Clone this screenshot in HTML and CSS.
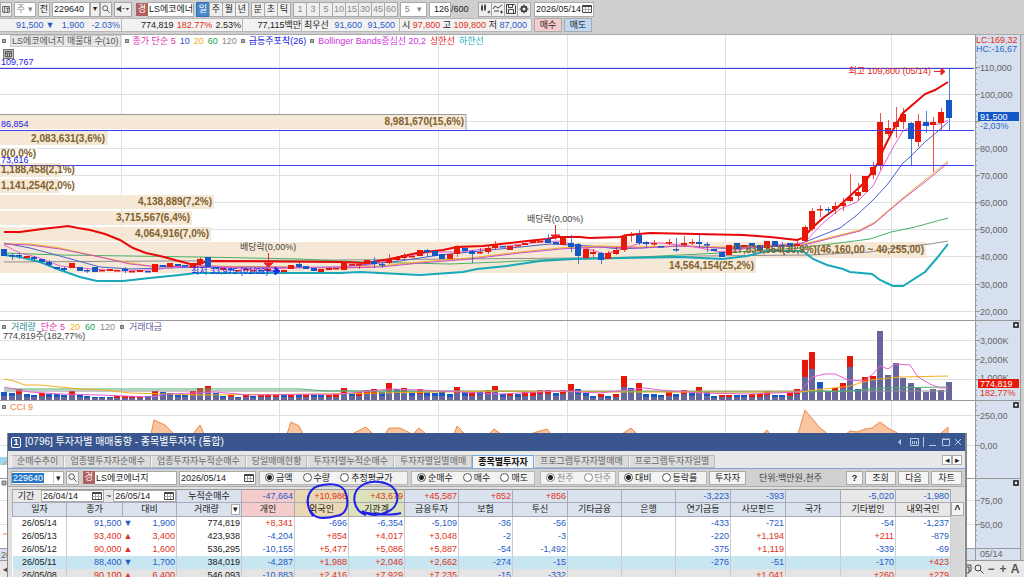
FILE: index.html
```html
<!DOCTYPE html>
<html lang="ko">
<head>
<meta charset="utf-8">
<title>LS에코에너지 - 주식 종합차트</title>
<link rel="stylesheet" href="styles.css">
</head>
<body>
<svg class="defs" aria-hidden="true">
  <symbol id="i-search" viewBox="0 0 12 12"><circle cx="5" cy="5" r="3" /><path d="M7.2 7.2L10.5 10.5" /></symbol>
  <symbol id="i-cal" viewBox="0 0 12 12"><path d="M1.500 2.500h9v7h-9zM1.500 3.500h9" /><path class="thin" d="M1.500 6.500h9M4.500 4v5M7.500 4v5" /></symbol>
</svg>
<header class="toolbar">
  <button class="tb w12" aria-label="메뉴"><svg viewBox="0 0 12 12"><path d="M2 3h8v7H2zM4.5 3v7M6 5h4M8 5v5" /></svg></button>
  <button class="tb w24 gap2 combo dim"><span>주</span><i>▾</i></button>
  <button class="tb w12 gap2">전</button>
  <input class="fld w38 gap2 num" aria-label="종목코드" value="229640"><button class="tb w10 tiny" aria-label="목록">▾</button>
  <button class="tb w12" aria-label="검색"><svg viewBox="0 0 12 12"><use href="#i-search" /></svg></button>
  <button class="tb w18 gap2" aria-label="소리"><svg viewBox="0 0 18 12"><path class="ink" d="M2 4.5h2l3-2.5v8L4 7.500H2zM12 5h4l-2 2.500z" /><path d="M8.500 5.500h2" /></svg></button>
  <span class="badge gap4">경</span><span class="fld name w46">LS에코에너</span>
  <nav class="set gap2"><button class="tb w13 on">일</button><button class="tb w13">주</button><button class="tb w13">월</button><button class="tb w13">년</button></nav>
  <nav class="set gap2"><button class="tb w13">분</button><button class="tb w13">초</button><button class="tb w13">틱</button></nav>
  <nav class="set gap2 num dim"><button class="tb w13">1</button><button class="tb w13">3</button><button class="tb w13">5</button><button class="tb w13">10</button><button class="tb w13">15</button><button class="tb w13">30</button><button class="tb w13">45</button><button class="tb w13">60</button></nav>
  <button class="tb w26 gap2 combo dim num"><span>5</span><i>▾</i></button>
  <input class="fld w20 gap2 num right" aria-label="봉 개수" value="126"><span class="num total">/600</span>
  <nav class="set gap6">
    <button class="tb w13" aria-label="봉"><svg viewBox="0 0 12 12"><path d="M3 1.500v7M6 1v7M8.500 9h3M10 7.500v3" /><path class="ink" d="M2 3h2v4H2zM5 2.500h2v4H5z" /></svg></button>
    <button class="tb w13" aria-label="선"><svg viewBox="0 0 12 12"><path d="M1 6l2-3 3 2 4-3M2 8h5M8 9h3M9.500 7.500v3" /></svg></button>
    <button class="tb w13" aria-label="저장"><svg viewBox="0 0 12 12"><path d="M1.500 1.500h8l1 1v8h-9zM3.500 1.500v3h4v-3M3.500 10.500v-4h5v4" /></svg></button>
    <button class="tb w13" aria-label="설정"><svg viewBox="0 0 12 12"><circle cx="6" cy="6" r="2.500" class="gear" /><path d="M6 1.500v2M6 8.500v2M1.500 6h2M8.500 6h2M3 3l1 1M8 8l1 1M9 3L8 4M4 8L3 9" /></svg></button>
  </nav>
  <span class="fld date gap3 num w58"><input aria-label="날짜" value="2026/05/14"><svg viewBox="0 0 12 12"><use href="#i-cal" /></svg></span>
</header>
<section class="quote num">
  <div class="qbox q1 dn"><b>91,500<i class="tri">▼</i></b><b>1,900</b><b>-2.03%</b></div>
  <div class="qbox q2"><b>774,819</b><b class="up">182.77%</b><b>2.53%</b></div>
  <div class="qbox q3"><b>77,115<em>백만</em></b></div>
  <div class="qbox q4"><em>최우선</em><b class="dn">91,600</b><b class="dn">91,500</b></div>
  <div class="qbox q5"><em>시</em><b class="up">97,800</b><em>고</em><b class="up">109,800</b><em>저</em><b class="dn">87,000</b></div>
  <button class="buy">매수</button><button class="sell">매도</button>
</section>
<main class="chart">
  <svg class="plot" viewBox="0 35 975 525" preserveAspectRatio="xMinYMin meet">
    <g id="grid"></g>
    <g class="profile">
      <path class="edge" d="M0 114.500H466V130" />
      <path d="M0 115H465V129H0zM0 131H108V145H0zM0 163H61V177H0zM0 179H59V193H0zM0 195H214V209H0zM0 211H192V225H0zM0 227H211V241H0zM0 242H926V258H756V273H0z" />
    </g>
    <g id="series"></g>
    <g class="levels"><path d="M0 68.500H974M0 130.500H974M0 165.500H974" /></g>
    <g class="ptext">
      <text class="end" x="464" y="125">8,981,670(15,6%)</text>
      <text class="end" x="105" y="142">2,083,631(3,6%)</text>
      <text x="1" y="157">0(0,0%)</text>
      <text x="1" y="173">1,188,458(2,1%)</text>
      <text x="1" y="189">1,141,254(2,0%)</text>
      <text class="end" x="212" y="205">4,138,889(7,2%)</text>
      <text class="end" x="190" y="221">3,715,567(6,4%)</text>
      <text class="end" x="209" y="237">4,064,916(7,0%)</text>
      <text class="end" x="754" y="269">14,564,154(25,2%)</text>
      <text class="end" x="924" y="253">17,834,564(30,9%)(46,160,00 ~ 40,255,00)</text>
    </g>
    <g class="ltext"><text x="1" y="65">109,767</text><text x="1" y="127">86,854</text><text x="1" y="163">73,616</text><text x="191" y="274">최저 33,975 (01/02)</text></g>
    <g class="ntext"><text x="240" y="250">배당락(0,00%)</text><text x="527" y="222">배당락(0,00%)</text><text x="3" y="339">774,819주(182,77%)</text></g>
    <text class="htext end" x="931" y="74">최고 109,800 (05/14)</text>
    <path class="redmark" d="M934 71.500h8M941 68l4 3.500-4 3.500zM268.500 253v11M264 263h9l-4.500 4zM555.500 225v11M551 235h9l-4.500 4z" />
    <path class="bluemark" d="M266 271h10M275 267l5 4-5 4z" />
    <g class="frames"><path d="M0 320.500H975M0 400.500H975M0 478.500H975M0 548.500H975" /></g>
    <g class="edgebits"><path class="cyan" d="M0 457h8v8H0z" /><path class="orange" d="M3 465l4-4h2M3 534h6" /><path class="mk" d="M2 481h4v4H2z" /><path class="datebar" d="M0 549H975V560H0z" /><text x="1" y="558">2025/11</text></g>
  </svg>
  <svg class="axis" viewBox="975 35 49 525" preserveAspectRatio="xMinYMin meet">
    <path class="bg" d="M975 35H1020V560H975z" />
    <g id="ticks"></g>
    <path class="line" d="M975.500 35V560M1020.500 35V560M975 320.500H1020M975 400.500H1020M975 478.500H1020M975 548.500H1020" />
    <text class="up" x="976" y="43">LC:169,32</text><text class="dn" x="976" y="52">HC:-16,67</text>
    <path class="nowbg" d="M978 112H1019V121H978z" /><text class="now" x="980" y="120">91,500</text><text class="dn" x="980" y="129">-2,03%</text>
    <path class="volbg" d="M978 379H1019V388H978z" /><text class="now" x="980" y="387">774,819</text><text class="up" x="980" y="396">182,77%</text>
    <text x="980" y="557">05/14</text>
    <path class="cl" d="M1013 322h6v6h-6zM1013 402h6v6h-6zM1013 480h6v6h-6z" /><path class="clx" d="M1015 324h2v2h-2zM1015 404h2v2h-2zM1015 482h2v2h-2z" />
  </svg>
  <div class="legend l1">
    <i></i><span class="cap">LS에코에너지 매물대 수(10)</span><i></i><span class="mg">종가 단순 5</span><span class="bl">10</span><span class="ye">20</span><span class="gn">60</span><span class="gy">120</span><i></i><span class="bb">급등주포착(26)</span><i></i><span class="mg2">Bollinger Bands중심선 20,2</span><span class="rd">상한선</span><span class="cy">하한선</span>
  </div>
  <button class="mini" aria-label="지표 목록"><svg viewBox="0 0 10 9"><path d="M1.500 1.500h7v6h-7zM1.500 3.500h7M3.800 3.500v4M6.200 3.500v4" /></svg></button>
  <div class="legend l2"><i></i><span class="te">거래량</span><span class="mg">단순 5</span><span class="ye">20</span><span class="gn">60</span><span class="gy">120</span><i></i><span class="pu">거래대금</span></div>
  <div class="legend l3"><i></i><span class="og">CCI 9</span></div>
</main>
<footer class="foot"><button aria-label="왼쪽">◂</button><span class="track"></span><button aria-label="복사"><svg viewBox="0 0 12 12"><path d="M2 4h6v6H2zM4 4V2h6v6H8" /></svg></button><button aria-label="확대보기"><svg viewBox="0 0 12 12"><use href="#i-search" /></svg></button><button>−</button><button>+</button><button>A</button></footer>

<section class="win">
  <div class="title"><span class="no">1</span><h1>[0796] 투자자별 매매동향 - 종목별투자자 (통합)</h1>
    <svg class="ctl" viewBox="0 0 66 12"><path class="fill" d="M5 3v6L2 6z" /><path d="M14.500 2.500h8v7h-8zM16.500 8V5M18.500 8V5M20.500 8V5M27.500 1v10M33 9.500h7M46.500 3.500h7v6h-7zM46 3h8M59 3l6 6M65 3l-6 6" /></svg>
  </div>
  <nav class="tabs"><button>순매수추이</button><button>업종별투자자순매수</button><button>업종투자자누적순매수</button><button>당일매매현황</button><button>투자자별누적순매수</button><button>투자자별일별매매</button><button class="sel">종목별투자자</button><button>프로그램투자자별매매</button><button>프로그램투자자일별</button><span class="arrows"><button aria-label="이전 탭">◂</button><button aria-label="다음 탭">▸</button></span></nav>
  <form class="filter">
    <span class="fld code num"><input aria-label="종목" value="229640" class="marked"><i>▾</i></span>
    <button type="button" class="sq" aria-label="검색"><svg viewBox="0 0 12 12"><use href="#i-search" /></svg></button>
    <span class="badge">경</span><span class="fld name">LS에코에너지</span>
    <span class="fld date num"><input aria-label="일자" value="2026/05/14"><svg viewBox="0 0 12 12"><use href="#i-cal" /></svg></span>
    <fieldset class="g1"><label><input type="radio" name="a" checked>금액</label><label><input type="radio" name="a">수량</label><label><input type="radio" name="a">추정평균가</label></fieldset>
    <fieldset class="g2"><label><input type="radio" name="b" checked>순매수</label><label><input type="radio" name="b">매수</label><label><input type="radio" name="b">매도</label></fieldset>
    <fieldset class="g3 off"><label><input type="radio" name="c" checked>천주</label><label><input type="radio" name="c">단주</label></fieldset>
    <fieldset class="g4"><label><input type="radio" name="d" checked>대비</label><label><input type="radio" name="d">등락률</label></fieldset>
    <button type="button" class="inv">투자자</button>
    <span class="unit">단위:백만원,천주</span>
    <button type="button" class="q">?</button><button type="button">조회</button><button type="button">다음</button><button type="button">차트</button>
  </form>
  <div class="sheet">
    <table>
      <colgroup><col class="c54"><col class="c56"><col class="c54"><col class="c65"><col class="c53"><col class="c54"><col class="c56"><col class="c54"><col class="c54"><col class="c55"><col class="c54"><col class="c54"><col class="c55"><col class="c55"><col class="c55"><col class="c55"><col class="c55"></colgroup>
      <thead>
        <tr class="sum"><td colspan="3" class="period"><span class="prow"><label for="from">기간</label><span class="fld date num"><input id="from" value="26/04/14"><svg viewBox="0 0 12 12"><use href="#i-cal" /></svg></span><span>~</span><span class="fld date num"><input aria-label="종료일" value="26/05/14"><svg viewBox="0 0 12 12"><use href="#i-cal" /></svg></span></span></td><th>누적순매수</th><td class="pk dn">-47,664</td><td class="tan up">+10,986</td><td class="grn up">+43,679</td><td class="up">+45,587</td><td class="up">+852</td><td class="up">+856</td><td></td><td></td><td class="dn">-3,223</td><td class="dn">-393</td><td></td><td class="lt dn">-5,020</td><td class="lt dn">-1,980</td></tr>
        <tr class="head"><th>일자</th><th>종가</th><th>대비</th><th><span class="vh">거래량<button aria-label="선택">▾</button></span></th><th class="pk">개인</th><th class="tan">외국인</th><th class="grn">기관계</th><th>금융투자</th><th>보험</th><th>투신</th><th>기타금융</th><th>은행</th><th>연기금등</th><th>사모펀드</th><th>국가</th><th class="lt">기타법인</th><th class="lt">내외국인</th></tr>
      </thead>
      <tbody id="rows"></tbody>
    </table>
    <div class="scroll"><button aria-label="위로">^</button></div>
  </div>
  <svg class="pen" viewBox="0 0 110 50"><path d="M10 38C2 28 3 12 15 8C25 5 37 5 42 13C47 25 44 37 33 38C23 41 14 42 9 35C4 29 3 21 7 14M63 37C49 32 48 15 58 8C68 1 86 3 92 12C97 20 94 30 84 34C76 38 67 38 59 33C62 36 88 38 98 35" /></svg>
</section>
<script src="chart.js"></script>
</body>
</html>
```
FILE: styles.css
```css
* { box-sizing: border-box; }
body {
  margin: 0; height: 100vh; overflow: hidden; position: relative;
  display: flex; flex-direction: column;
  background: #cfcfcf; color: #222;
  font: 9px/12px "Liberation Sans", "Noto Sans CJK KR", sans-serif;
}
button, input { font: inherit; color: inherit; padding: 0; margin: 0; border: 0; border-radius: 0; background: none; }
i, em, b { font-style: normal; font-weight: 400; }
svg { display: block; fill: none; stroke: #444; }
.defs { position: absolute; width: 0; height: 0; }
.thin { stroke: #aaa; }
.ink { fill: #444; stroke: none; }
.gear { stroke-width: 2; }
.up { color: #e03020; fill: #e03020; }
.dn { color: #2a5ac8; fill: #2a5ac8; }

.toolbar { flex: none; height: 17px; display: flex; align-items: center; padding: 1px 0 0; white-space: nowrap; }
.tb { height: 15px; border: 1px solid #a8a8a8; background: #efefef; display: flex; align-items: center; justify-content: center; flex: none; overflow: hidden; }
.tb svg { width: 100%; height: 12px; }
.set { display: flex; }
.on { background: #4a86c8; color: #fff; border-color: #3a70b0; }
.dim { color: #888; }
.combo { justify-content: space-around; background: #fff; }
.tiny { font-size: 8px; }
.fld { height: 15px; border: 1px solid #aaa; background: #fff; flex: none; overflow: hidden; display: flex; align-items: center; }
.fld input { min-width: 0; flex: 1; width: 0; padding-left: 1px; }
.date svg { width: 12px; height: 12px; flex: none; }
input.fld { padding: 0 1px; }
.right { text-align: right; }
.badge { width: 12px; height: 13px; background: #b06060; color: #fff; text-align: center; flex: none; line-height: 13px; }
.name { white-space: nowrap; border-left: 0; padding-left: 1px; }
.total { width: 21px; }
.w10 { width: 10px; } .w12 { width: 12px; } .w13 { width: 14px; margin-right: -1px; }
.w13:last-child { margin-right: 0; }
.w18 { width: 18px; } .w20 { width: 22px; } .w24 { width: 22px; } .w26 { width: 27px; } .w38 { width: 38px; } .w46 { width: 46px; } .w58 { width: 60px; }
.gap2 { margin-left: 2px; } .gap3 { margin-left: 3px; } .gap4 { margin-left: 4px; } .gap6 { margin-left: 6px; }

.quote { flex: none; height: 18px; display: flex; align-items: flex-start; padding-top: 1px; border-bottom: 1px solid #aaa; white-space: nowrap; }
.qbox { height: 14px; background: #f2f2f2; border: 1px solid #b8b8b8; border-left: 0; display: flex; justify-content: space-between; align-items: center; }
.q1 { width: 122px; padding: 0 1px 0 16px; } .q2 { width: 121px; padding: 0 1px 0 19px; }
.q3 { width: 59px; justify-content: flex-end; } .q4 { width: 98px; padding: 0 4px 0 2px; } .q5 { width: 132px; padding: 0 4px 0 2px; }
.tri { font-size: 9px; margin-left: 2px; }
.buy, .sell { width: 28px; height: 14px; margin-left: 2px; border: 1px solid #aaa; line-height: 12px; }
.buy { background: #f5cccc; } .sell { background: #bed8f2; }

.chart { flex: 1; min-height: 0; position: relative; display: grid; grid-template-columns: 1fr 49px; overflow: hidden; background: #fff; }
.plot, .axis { width: 100%; height: 525px; }
.axis { background: #cfcfcf; }
.chart text { font-size: 9px; stroke: none; }
.end { text-anchor: end; }
#grid path { stroke: #e0e0e0; }
.profile path { fill: #f5e8d6; stroke: none; }
.profile .edge { fill: none; stroke: #999; }
.levels path { stroke: #4040ee; }
.ptext text { font-size: 10px; font-weight: 700; fill: #80602c; }
.ltext { fill: #2222ee; } .ntext { fill: #444; } .htext { fill: #e82020; }
.redmark { stroke: #e82020; fill: #e82020; } .bluemark { stroke: #2222ee; fill: #2222ee; }
.frames path, .axis .line { stroke: #999; }
.cyan { fill: #9bd8ec; stroke: none; } .orange { stroke: #f08040; } .mk { fill: #aaa; stroke: #777; } .datebar { fill: #d6e0ee; stroke: none; }
.edgebits text, .axis text { fill: #666; }
.axis .bg { fill: #d6e0ee; stroke: none; }
.axis .up { fill: #e03020; } .axis .dn { fill: #2a6ac8; } .axis .now { fill: #fff; }
.nowbg { fill: #1458c8; stroke: none; } .volbg { fill: #e81808; stroke: none; }
.cl { fill: #444; stroke: none; } .clx { fill: #eee; stroke: none; }
#ticks path { stroke: #999; }
.ma { stroke-width: 1; }
.upper { stroke: #e80808; stroke-width: 2; } .lower { stroke: #18a8b8; stroke-width: 2; }
.m5 { stroke: #e860d0; } .m10 { stroke: #4a60c8; } .m20 { stroke: #f0b020; } .mid { stroke: #c850c8; } .m60 { stroke: #48b068; } .m120 { stroke: #909090; }
.r { fill: #e81808; stroke: #e81808; } .b { fill: #1458c8; stroke: #1458c8; } .p { fill: #66669c; }
.body { stroke: none; }
.cci { fill: #f9c4a0; stroke: #f08848; }

.legend { position: absolute; left: 2px; display: flex; align-items: center; gap: 4px; white-space: nowrap; }
.legend i { width: 4px; height: 4px; border: 1px solid #777; background: #aaa; }
.l1 { top: 0; } .l2 { top: 286px; gap: 5px; } .l3 { top: 366px; }
.cap { background: #e8e8e8; border: 1px solid #ccc; line-height: 10px; padding: 0 1px; color: #555; }
.mg { color: #e030b0; } .mg2 { color: #d030e0; } .bl { color: #3050c0; } .ye { color: #f0b020; } .gn { color: #20a050; } .gy { color: #888; }
.bb { color: #1818e8; } .rd { color: #e82020; } .cy { color: #20b0c0; } .te { color: #309090; } .pu { color: #66669c; } .og { color: #f08040; }
.mini { position: absolute; left: 3px; top: 14px; width: 11px; height: 10px; border: 1px solid #777; background: #ccc; }
.foot { flex: none; height: 17px; display: flex; align-items: center; background: #e8e8e8; border-top: 1px solid #999; padding-right: 3px; }
.foot button { width: 12px; font-size: 12px; font-weight: 700; color: #555; text-align: center; }
.foot svg { width: 12px; height: 12px; }
.track { flex: 1; }

.win { position: absolute; left: 7px; right: 57px; top: 433px; bottom: 0; background: #e8e8e8; border-left: 1px solid #888; border-right: 2px solid #888; overflow: hidden; }
.title { height: 18px; background: #39568f; color: #fff; display: flex; align-items: center; padding: 0 3px; gap: 4px; }
.title h1 { font: inherit; font-size: 10px; margin: 0; flex: 1; }
.no { width: 10px; height: 11px; border: 1px solid #fff; border-radius: 2px; line-height: 9px; text-align: center; font-weight: 700; }
.ctl { width: 66px; height: 12px; stroke: #b8c8e8; } .ctl .fill { fill: #b8c8e8; stroke: none; }
.tabs { height: 18px; padding: 4px 3px 0; display: flex; border-bottom: 1px solid #7aa6dc; white-space: nowrap; }
.tabs > button { height: 13px; padding: 0 5px; border: 1px solid #b8b8b8; border-left-color: #f4f4f4; background: #dcdcdc; color: #666; line-height: 11px; }
.tabs .sel { background: #f4f4f4; color: #111; font-weight: 700; border-color: #7aa6dc; border-bottom: 0; }
.arrows { margin-left: auto; display: flex; }
.arrows button { width: 10px; height: 10px; border: 1px solid #aaa; background: #fff; line-height: 8px; }
.filter { height: 18px; padding: 0 3px; background: #d0d0d0; border-bottom: 1px solid #aaa; display: flex; align-items: center; gap: 2px; white-space: nowrap; }
.filter .code { width: 53px; } .filter .date { width: 77px; } .filter .name { width: 82px; margin-left: -2px; }
.filter .fld { height: 14px; }
.code .marked { flex: none; width: 32px; background: #2878c8; color: #fff; line-height: 10px; }
.code i { margin-left: auto; font-size: 9px; border-left: 1px solid #ccc; padding: 0 2px; }
.filter button { height: 14px; width: 31px; flex: none; background: #f4f4f4; border: 1px solid #aaa; line-height: 12px; }
.filter .sq { width: 13px; margin-right: 2px; } .filter .q { width: 17px; font-weight: 700; } .filter .inv { width: 37px; }
.sq svg { width: 11px; height: 11px; }
fieldset { margin: 0; padding: 0 0 0 5px; border: 1px solid #b8b8b8; height: 14px; min-width: 0; background: #f2f2f2; display: flex; align-items: center; gap: 10px; flex: none; }
fieldset label { display: flex; align-items: center; gap: 2px; }
fieldset input { appearance: none; width: 9px; height: 9px; border: 1px solid #555; border-radius: 50%; background: #fff; }
fieldset input:checked { background: radial-gradient(#222 0 2px, #fff 3px); }
.off { color: #888; }
.off input { border-color: #888; }
.g1 { width: 149px; margin-left: 1px; } .g2 { width: 124px; margin-left: 1px; } .g3 { width: 76px; margin-left: 3px; } .g4 { width: 89px; }
.unit { flex: 1; padding-left: 11px; color: #444; }
.sheet { display: flex; padding: 2px 4px 0; background: #e0e0e0; }
table { flex: 1; table-layout: fixed; width: 100%; border-collapse: collapse; background: #fff; }
.c53 { width: 53px; } .c54 { width: 54px; } .c55 { width: 55px; } .c56 { width: 56px; } .c65 { width: 65px; }
td, th { height: 13px; padding: 0 1px; font-weight: 400; line-height: 11px; border-right: 1px solid #ccc; white-space: nowrap; overflow: hidden; }
td { text-align: right; }
thead td, thead th { background: #dae2ee; border: 1px solid #aab; border-top-color: #999; }
.head th { height: 14px; }
thead .pk { background: #f5cccc; } thead .tan { background: #ead8b4; } thead .grn { background: #dce2bc; } thead .lt { background: #e8e8e8; }
thead .period { background: #e8e8e8; padding: 0; }
.prow { display: flex; align-items: center; gap: 2px; }
.prow label { width: 26px; text-align: center; }
.prow .date { flex: 1; height: 12px; }
.vh { display: flex; align-items: center; padding-left: 16px; }
.vh button { margin-left: auto; width: 9px; height: 11px; background: #fff; border: 1px solid #aaa; line-height: 9px; }
tbody td:first-child { text-align: center; }
.nb { border-right: 0; }
.chg { display: flex; justify-content: space-between; }
.chg .tri { margin: 0; }
.cur td { background: #c8e6f2; } .last td { background: #e4e4e4; }
.scroll { width: 13px; margin-top: 13px; background: #d8d8d8; flex: none; }
.scroll button { width: 13px; height: 14px; background: #f4f4f4; border: 1px solid #aaa; font-size: 10px; font-weight: 700; line-height: 14px; }
.pen { position: absolute; left: 295px; top: 45px; width: 110px; height: 50px; stroke: #2020e8; stroke-width: 2; pointer-events: none; }
```
FILE: chart.js
```js
// Candles: colour, body top, body bottom, wick top, wick bottom
const candles = `b249 256;b255 256 253 260;b255 256 253 259;r256 258;b257 259 256 261;b259 262;b262 265 260 267;b267 269;b268 270 267 272;r263 268;b267 271;b270 271 269 273;b267 272;r270 271;r269 271;r270 271;b269 271 267 273;r271 272;r270 272;b271 272;r264 272;b265 267;r263 267;b264 266;b265 266;r263 268;r259 264 257 266;b257 267;b267 268;r268 270;b269 270;r270 271;r269 270;r270 271;b270 271;r269 271;b270 272;r270 272;r265 269;b264 267 262 268;b266 269;b268 271;r269 272;r268 270;r268 269;r262 270;r264 265;r264 265 262 269;r260 264;b261 264 257 268;b264 265 262 268;r259 263 254 264;r258 260 256 261;r255 258 253 260;r256 257;r250 256;b250 252 249 257;b251 256;b254 259;r254 259;r246 254 245 257;b248 251;b251 254 250 263;r252 253 248 254;r248 252 246 254;r245 248 241 249;b246 247;r246 250;r245 246;r243 245;r241 243;r241 242;b239 243 234 243;b242 244;r238 245;b243 247 235 252;b244 256 243 264;r249 258;r252 254 249 257;b253 260 252 264;r253 259 251 259;r250 254 247 255;r236 250 234 252;r234 236 232 242;b235 243 230 245;b242 244 241 248;r243 244 240 246;b246 247;r242 243 239 245;b249 250 238 252;r243 245 236 247;r242 243 239 245;b242 244 235 248;b244 245 242 252;b249 251;b252 257;r245 255;b243 249;r245 247;b243 246;b245 250;r241 248;b241 247;b245 246 242 249;b243 247;r244 246 240 249;r227 241 225 242;r211 229 208 231;r209 210 205 217;b209 210 207 215;r206 209 202 214;r203 206 198 211;r197 201 174 202;r192 196 183 201;r176 192;r167 175 162 179;r122 166 113 170;r128 134 120 136;r122 127 107 138;r114 122 108 129;b123 139 122 166;r121 142 114 147;b122 126 111 133;r122 125 117 172;r112 123 108 130;b100 118 68 130`.split(";");
// Volume bars: colour, height, optional height of the turnover part
const volumes = `b8 b7 r11 b6 b5 r7 b6 b6 b5 r9 b6 b4 b3 b3 b3 r4 r4 r4 r3 b4 r9 b8 b7 b5 b5 r9 r12 r14 b7 b4 r5 b3 r6 b4 r5 r6 r6 b5 r6 b6 r6 b6 b5 r5 r6 r12 b7 r8 r10 r11 b8 r17 b11 r12 b7 r11 b8 b7 b8 b6 r13 b8 r8 b9 r10 r14 b6 r7 b6 r8 r8 r10 r10 b7 r10 r16 b11 b7 b4 r6 b4 r6 r24 b12 r17 b6 b6 b5 r8 b6 r10 b7 r13 b8 b4 r5 r5 b5 b5 r6 r6 r9 b5 b5 r7 r11 r40/23 r48/31 b18/12 b9/8 r12/9 r17/12 r44/33 b11/8 r23/18 r24/21 r69/69 b25/25 b37/37 b22/22 b17/17 b12/12 b8/8 b11/11 b10/10 b18/18`.split(" ");
const lines = {
  m120: "4,262 340,260 580,258 700,256 810,255 870,252 900,247 930,244 948,241",
  m60: "4,253 60,255 200,257 300,259 360,262 450,264 500,262 560,259 640,257 720,253 800,248 870,239 891,232 915,227 948,218",
  m10: "4,243 30,248 60,256 100,267 130,269 200,267 250,268 340,267 400,261 440,255 500,249 550,244 590,246 620,249 680,246 740,249 800,244 840,228 857,215 873,200 887,185 903,163 910,157 925,142 937,132 948,122",
  m20: "4,244 30,244 60,248 100,257 130,263 150,266 210,266 280,267 340,268 380,266 420,262 470,258 520,252 560,248 600,246 640,247 680,246 720,247 760,246 804,244 840,235 860,230 875,222 891,208 903,198 925,180 948,161",
  mid: "4,244 30,245 60,249 100,257 130,264 150,266 210,267 280,267 340,268 380,267 420,263 470,259 520,253 560,249 600,247 640,248 680,246 720,248 760,247 804,245 840,236 860,231 875,223 891,209 903,199 925,182 948,163",
  m5: "4,245 20,253 40,258 60,266 80,268 120,271 150,270 200,265 250,269 300,268 340,267 370,265 400,258 430,252 460,252 500,247 540,242 560,241 585,248 605,254 620,250 640,243 660,243 690,246 720,252 760,246 804,243 822,224 840,209 857,202 873,186 882,168 895,144 903,131 912,126 930,124 940,124 948,120",
  lower: "4,255 20,257 40,262 60,270 80,277 97,281 123,281 150,278 170,276 197,273 340,273 360,272 420,275 463,272 477,269 507,266 540,261 573,259 623,258 680,257 723,259 747,256 767,251 803,251 813,259 827,265 843,269 850,272 872,274 880,280 893,286 903,286 925,272 937,258 948,244",
  upper: "4,232 20,232 42,229 60,227 68,226 78,228 90,230 105,234 120,240 133,248 146,253 160,256 175,260 190,264 200,264 207,261 340,262 366,263 390,259 417,253 443,250 457,247 483,246 527,241 547,239 557,237 580,237 590,238 620,237 627,235 650,233 743,235 770,237 797,240 803,238 812,228 823,218 838,207 850,196 865,182 880,160 883,150 893,130 903,113 910,107 925,94 935,90 948,82"
};
const volLines = {
  m120: "4,391 948,391",
  m60: "4,389 300,389 325,391 800,392 850,391 880,388 948,387",
  m20: "4,379 14,381 25,385 40,385 80,389 105,390 130,393 200,395 320,394 500,391 620,392 800,392 850,386 870,380 900,377 948,376",
  m5: "4,387 30,392 60,394 100,395 150,397 170,394 215,392 250,395 340,394 390,389 420,390 500,394 560,391 600,393 645,388 660,390 700,393 750,394 800,392 812,377 825,374 835,374 848,380 863,381 873,374 880,366 888,369 895,364 910,365 918,377 930,384 940,388 948,388"
};
const cci = ["151,434 154,420 165,425 174,434", "193,434 200,425 204,434", "287,434 291,422 299,426 303,434", "352,434 366,427 373,434", "385,434 389,428 400,428 412,434", "413,434 419,428 426,434", "454,434 457,426 465,434", "489,434 494,429 501,434", "530,434 547,429 551,434", "622,434 631,428 637,434", "763,434 767,430 770,434", "798,434 805,410 820,428 828,434", "846,434 850,431 857,432 865,429 872,428 880,422 888,428 899,434", "940,434 948,427 948,434"];

const polys = set => Object.entries(set).map(([k, p]) => `<polyline class="ma ${k}" points="${p}"/>`).join("");
const rect = (c, x, y, w, h) => `<rect class="body ${c}" x="${x}" y="${y}" width="${w}" height="${h}"/>`;
const xAt = i => Math.round(4 + i * 944.5 / 125);

let s = "";
candles.forEach((d, i) => {
  const c = d[0], [t, b, wt = t, wb = b] = d.slice(1).split(" ").map(Number), x = xAt(i);
  s += `<path class="${c}" stroke-opacity=".75" d="M${x + 0.5} ${wt}V${wb}"/>` + rect(c, x - 3, t, 6, Math.max(b - t, 1.5));
});
let v = "";
volumes.forEach((d, i) => {
  const [h, part] = d.slice(1).split("/").map(Number), p = part || Math.round(h * 0.55), x = xAt(i) - 3;
  v += rect(d[0], x, 400 - h, 6, h - p) + rect("p", x, 400 - p, 6, p);
});
document.getElementById("series").innerHTML = polys(lines) + s + v + polys(volLines) + cci.map(p => `<polyline class="cci" points="${p}"/>`).join("");

const ys = [67, 94, 121, 148, 175, 202, 229, 256, 284, 311, 340, 359, 379, 415, 445, 500, 524].map(y => y + 0.5);
document.getElementById("grid").innerHTML = `<path d="${ys.map(y => `M0 ${y}H975`).join("")}${[121, 279, 438, 567, 725, 891].map(x => `M${x}.5 35V548`).join("")}"/>`;
const names = ["110,000", "100,000", "", "80,000", "70,000", "60,000", "50,000", "40,000", "30,000", "20,000", "3,000K", "2,000K", "1,000K", "250,00", "0,00", "75,00", "50,00"];
let minor = "";
for (let y = 57; y < 318; y += 5.4) minor += `M975 ${Math.round(y) + 0.5}h2`;
for (let y = 325; y < 545; y += 5) minor += `M975 ${y + 0.5}h2`;
document.getElementById("ticks").innerHTML = `<path d="${minor}${ys.map(y => `M975 ${y}h5`).join("")}"/>` + names.map((n, i) => `<text x="980" y="${ys[i] + (n === "1,000K" ? 1 : 3)}">${n}</text>`).join("");

const data = [
  ["26/05/14", "91,500", "▼1,900", "774,819", "+8,341", "-696", "-6,354", "-5,109", "-36", "-56", "", "", "-433", "-721", "", "-54", "-1,237"],
  ["26/05/13", "93,400", "▲3,400", "423,938", "-4,204", "+854", "+4,017", "+3,048", "-2", "-3", "", "", "-220", "+1,194", "", "+211", "-879"],
  ["26/05/12", "90,000", "▲1,600", "536,295", "-10,155", "+5,477", "+5,086", "+5,887", "-54", "-1,492", "", "", "-375", "+1,119", "", "-339", "-69"],
  ["26/05/11", "88,400", "▼1,700", "384,019", "-4,287", "+1,988", "+2,046", "+2,662", "-274", "-15", "", "", "-276", "-51", "", "-170", "+423"],
  ["26/05/08", "90,100", "▲6,400", "546,093", "-10,883", "+2,416", "+7,929", "+7,235", "-15", "-332", "", "", "", "+1,041", "", "+260", "+279"]
];
document.getElementById("rows").innerHTML = data.map((r, n) => {
  const dir = r[2][0] === "▲" ? "up" : "dn";
  return `<tr class="${n === 3 ? "cur" : n === 4 ? "last" : ""}">` + r.map((t, i) => {
    if (i === 1) return `<td class="nb ${dir}">${t}</td>`;
    if (i === 2) return `<td class="${dir}"><span class="chg"><i class="tri">${t[0]}</i>${t.slice(1)}</span></td>`;
    const c = i > 3 ? (t[0] === "+" ? "up" : "dn") : "";
    return `<td class="${c}">${t}</td>`;
  }).join("") + "</tr>";
}).join("");
```
